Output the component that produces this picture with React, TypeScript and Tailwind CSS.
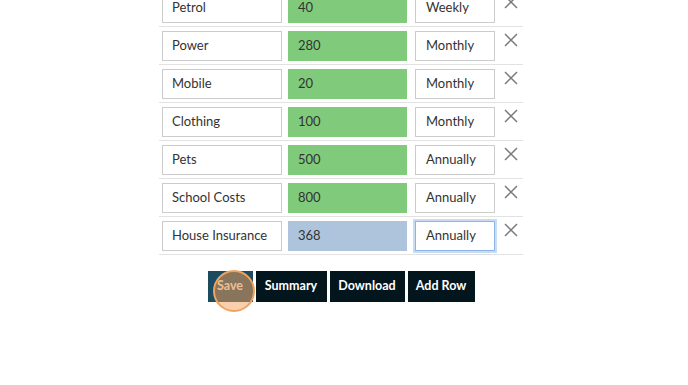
import React from "react";

const rows = [
  { name: "Petrol", amount: "40", freq: "Weekly", color: "green" },
  { name: "Power", amount: "280", freq: "Monthly", color: "green" },
  { name: "Mobile", amount: "20", freq: "Monthly", color: "green" },
  { name: "Clothing", amount: "100", freq: "Monthly", color: "green" },
  { name: "Pets", amount: "500", freq: "Annually", color: "green" },
  { name: "School Costs", amount: "800", freq: "Annually", color: "green" },
  { name: "House Insurance", amount: "368", freq: "Annually", color: "blue" },
];

function XIcon() {
  return (
    <svg width="14" height="14" viewBox="0 0 14 14" className="block">
      <path d="M1 1 L13 13 M13 1 L1 13" stroke="#7a7a7a" strokeWidth="1.5" fill="none" />
    </svg>
  );
}

export default function App() {
  return (
    <div
      className="w-[688px] h-[385px] overflow-hidden bg-white text-[#333]"
      style={{ fontFamily: "Lato, 'Open Sans', sans-serif" }}
    >
      <div className="ml-[159px] w-[364px] mt-[-11px]">
        {rows.map((r, i) => {
          const last = i === rows.length - 1;
          return (
            <div key={r.name} className="flex border-b border-[#e2e2e2] pt-[4px] pb-[3px] pl-[3px]">
              <div className="w-[120px] h-[30px] border border-[#cccccc] bg-white flex items-center pl-[9px] text-[13px]">
                {r.name}
              </div>
              <div
                className={`ml-[6px] w-[119px] h-[30px] flex items-center pl-[10px] text-[13px] ${
                  r.color === "green" ? "bg-[#80cb7b]" : "bg-[#adc4dc]"
                }`}
              >
                {r.amount}
              </div>
              <div
                className={`ml-[8px] w-[80px] h-[30px] bg-white flex items-center pl-[10px] text-[13px] ${
                  last
                    ? "border border-[#8db4e6] shadow-[0_0_0_2px_#c9dcf5]"
                    : "border border-[#cccccc]"
                }`}
              >
                {r.freq}
              </div>
              <div className="ml-[9px] pt-[2px]">
                <XIcon />
              </div>
            </div>
          );
        })}
        <div className="flex justify-center gap-[3px] mt-[16px] text-white font-bold text-[12.5px]">
          <div className="relative w-[45px] h-[31px] bg-[#1c4b5f] flex items-center justify-center pb-[1px]">
            <span className="relative z-0 text-[#e8dccb]">Save</span>
            <div className="absolute left-[5px] top-[-1px] w-[42px] h-[42px] rounded-full border-2 border-[#f0a35e] bg-[#f5a05a]/50" />
          </div>
          <div className="w-[71px] h-[31px] bg-[#04161d] flex items-center justify-center pb-[1px]">Summary</div>
          <div className="w-[75px] h-[31px] bg-[#04161d] flex items-center justify-center pb-[1px]">Download</div>
          <div className="w-[67px] h-[31px] bg-[#04161d] flex items-center justify-center pb-[1px]">Add Row</div>
        </div>
      </div>
    </div>
  );
}
